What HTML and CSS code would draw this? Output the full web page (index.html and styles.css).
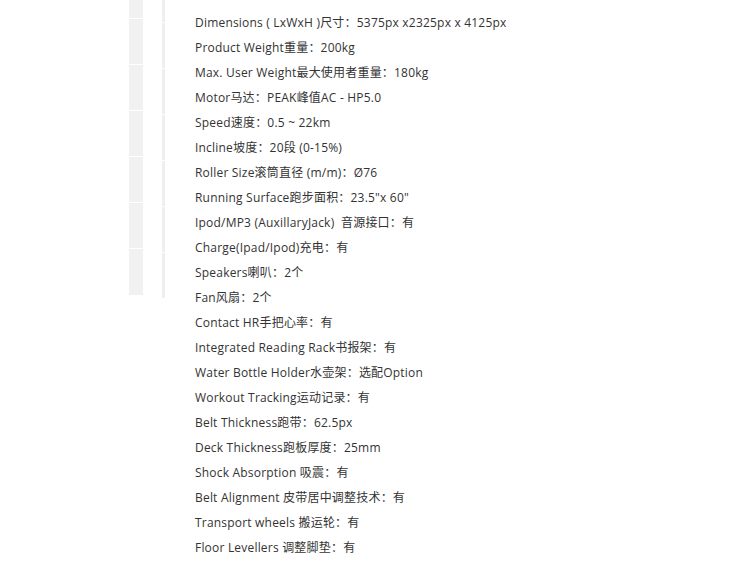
FILE: index.html
```html
<!DOCTYPE html>
<html lang="zh">
<head>
<meta charset="utf-8">
<link rel="stylesheet" href="styles.css">
</head>
<body>
<div class="page">
  <div class="rail rail-wide">
    <div class="seg s18"></div>
    <div class="seg s45"></div>
    <div class="seg s45"></div>
    <div class="seg s45"></div>
    <div class="seg s45"></div>
    <div class="seg s45"></div>
    <div class="seg s46"></div>
  </div>
  <div class="rail rail-thin">
    <div class="seg s22"></div>
    <div class="seg s45"></div>
    <div class="seg s45"></div>
    <div class="seg s45"></div>
    <div class="seg s45"></div>
    <div class="seg s45"></div>
    <div class="seg s45"></div>
  </div>
  <ul class="specs">
    <li>Dimensions ( LxWxH )尺寸：5375px x2325px x 4125px</li>
    <li>Product Weight重量：200kg</li>
    <li>Max. User Weight最大使用者重量：180kg</li>
    <li>Motor马达：PEAK峰值AC - HP5.0</li>
    <li>Speed速度：0.5 ~ 22km</li>
    <li>Incline坡度：20段 (0-15%)</li>
    <li>Roller Size滚筒直径 (m/m)：Ø76</li>
    <li>Running Surface跑步面积：23.5"x 60"</li>
    <li>Ipod/MP3 (AuxillaryJack)&nbsp; 音源接口：有</li>
    <li>Charge(Ipad/Ipod)充电：有</li>
    <li>Speakers喇叭：2个</li>
    <li>Fan风扇：2个</li>
    <li>Contact HR手把心率：有</li>
    <li>Integrated Reading Rack书报架：有</li>
    <li>Water Bottle Holder水壶架：选配Option</li>
    <li>Workout Tracking运动记录：有</li>
    <li>Belt Thickness跑带：62.5px</li>
    <li>Deck Thickness跑板厚度：25mm</li>
    <li>Shock Absorption 吸震：有</li>
    <li>Belt Alignment 皮带居中调整技术：有</li>
    <li>Transport wheels 搬运轮：有</li>
    <li>Floor Levellers 调整脚垫：有</li>
  </ul>
</div>
</body>
</html>
```
FILE: styles.css
```css
html, body {
  margin: 0;
  padding: 0;
  background: #ffffff;
}
.page {
  display: flex;
  align-items: flex-start;
  padding-left: 129px;
  width: 750px;
  height: 567px;
  box-sizing: border-box;
  overflow: hidden;
}
.rail {
  display: flex;
  flex-direction: column;
  gap: 1px;
}
.rail-wide {
  width: 14px;
}
.rail-thin {
  width: 3px;
  margin-left: 19px;
}
.seg {
  background: #f1f1f1;
}
.rail-thin .seg {
  background: #efefef;
}
.s18 { height: 18px; }
.s22 { height: 22px; }
.s45 { height: 45px; }
.s46 { height: 46px; }
.specs {
  list-style: none;
  margin: 0;
  padding: 10px 0 0 30px;
  font-family: "Open Sans", "Noto Sans CJK SC", sans-serif;
  font-size: 12px;
  line-height: 25px;
  letter-spacing: 0.2px;
  color: #333333;
}
.specs li {
  white-space: nowrap;
}
```
